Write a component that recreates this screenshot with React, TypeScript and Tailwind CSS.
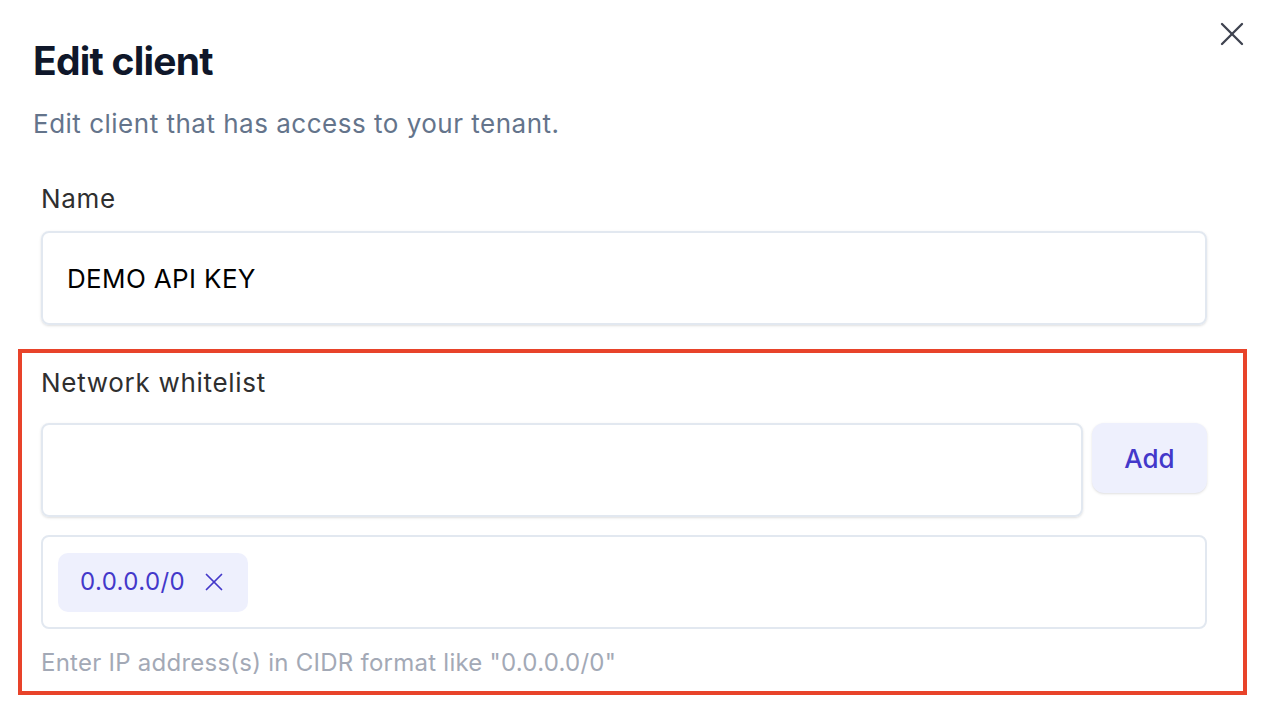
import React from 'react';
import { X } from 'lucide-react';

const font = { fontFamily: 'Inter, "Noto Sans", sans-serif' };

const App: React.FC = () => {
  return (
    <div className="relative w-[1264px] h-[718px] bg-white overflow-hidden" style={font}>
      <button className="absolute right-[12px] top-[14px] text-[#3f4350]">
        <X size={40} strokeWidth={1.4} />
      </button>

      <div className="pt-[37px] pl-[33px]">
        <h1 className="text-[39px] leading-[48px] font-bold tracking-[-0.02em] text-[#0f172a]">Edit client</h1>
        <p className="mt-[23px] text-[26px] leading-[32px] tracking-[0.5px] text-[#64748b]">Edit client that has access to your tenant.</p>
      </div>

      <div className="pl-[41px] pr-[57px]">
        <div className="mt-[43px] text-[26px] leading-[32px] tracking-[0.7px] text-[#2f2f2f]">Name</div>
        <div className="mt-[16px] h-[94px] flex items-center px-[24px] border-2 border-[#e2e8f0] rounded-lg shadow-sm text-[26px] tracking-[0.35px] text-black">
          DEMO API KEY
        </div>

        <div className="mt-[24px] -ml-[23px] -mr-[40px] pl-[19px] pr-[36px] pt-[14px] pb-[14px] border-4 border-[#e8432a]">
          <div className="text-[26px] leading-[32px] tracking-[0.7px] text-[#2f2f2f]">Network whitelist</div>
          <div className="mt-[24px] flex items-start gap-[9px]">
            <div className="flex-1 h-[94px] border-2 border-[#e2e8f0] rounded-lg shadow-sm" />
            <button className="w-[115px] h-[70px] rounded-xl bg-[#eef0fd] shadow-sm text-[26px] font-medium text-[#4338ca]">
              Add
            </button>
          </div>
          <div className="mt-[18px] h-[94px] border-2 border-[#e2e8f0] rounded-lg flex items-center px-[15px]">
            <div className="h-[59px] w-[190px] rounded-[10px] bg-[#eef0fd] flex items-center pl-[22px] gap-[14px] text-[#4338ca]">
              <span className="text-[24px] tracking-[0.4px]">0.0.0.0/0</span>
              <X size={30} strokeWidth={1.4} />
            </div>
          </div>
          <p className="mt-[20px] text-[24px] leading-[28px] tracking-[0.25px] text-[#a3a9b6]">
            Enter IP address(s) in CIDR format like "0.0.0.0/0"
          </p>
        </div>
      </div>
    </div>
  );
};

export default App;
